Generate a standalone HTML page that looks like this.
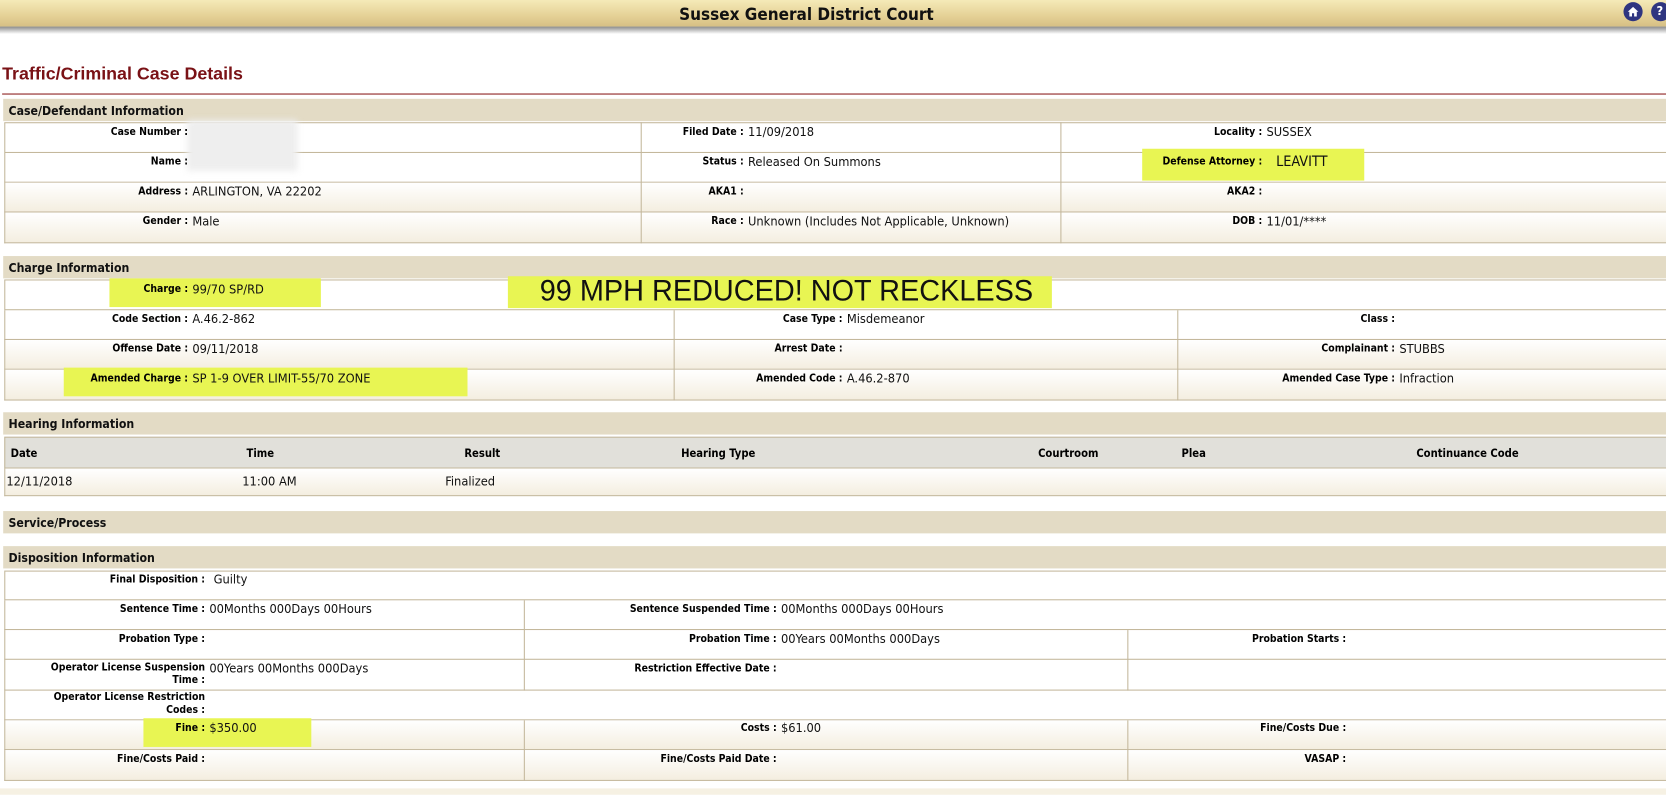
<!DOCTYPE html>
<html><head><meta charset="utf-8">
<style>
html,body{margin:0;padding:0;width:1666px;height:794px;overflow:hidden;background:#fff}
#w{position:absolute;left:0;top:0;width:1568px;height:747px;transform:scale(1.0625);transform-origin:0 0;font-family:"DejaVu Sans Condensed","DejaVu Sans",sans-serif;color:#111}
div{position:absolute;box-sizing:border-box}
.hb{left:3px;width:1600px;height:21px;background:#e3dbc5;font-weight:bold;font-size:11.5px;padding:4px 0 0 5px;color:#111}
.r{left:4px;width:1600px;border:1px solid #c4b89c;border-top:none}
.g{background:linear-gradient(#fff,#f4eee0)}
.v{width:1px;background:#c4b89c}
.l{text-align:right;font-weight:bold;font-size:9.8px;white-space:nowrap;color:#000}
.t{font-size:12px;white-space:nowrap}
.hl{background:#e8f553}
</style></head><body><div id="w">
<div style="left:0;top:0;width:1568px;height:25px;background:linear-gradient(#f5eab8,#e5d196 60%,#d6bf84)"></div>
<div style="left:0;top:25px;width:1568px;height:7px;background:linear-gradient(#8a8a8a,#fff)"></div>
<div style="left:0;top:4px;width:1518px;text-align:center;font-weight:bold;font-size:16px;color:#111">Sussex General District Court</div>
<div style="left:1528px;top:2px;width:18px;height:18px;border-radius:50%;background:#2f3580"><svg width="18" height="18" viewBox="0 0 18 18"><path d="M4 9 L9 4.5 L14 9 L12.5 9 L12.5 13.5 L10 13.5 L10 10.5 L8 10.5 L8 13.5 L5.5 13.5 L5.5 9 Z" fill="#fff"/></svg></div>
<div style="left:1554px;top:2px;width:18px;height:18px;border-radius:50%;background:#2f3580;color:#fff;font-weight:bold;font-size:12px;padding:1px 0 0 5px">?</div>

<div style="left:2px;top:60px;font-family:'Liberation Sans',sans-serif;font-weight:bold;font-size:16.8px;color:#7a1216">Traffic/Criminal Case Details</div>
<div style="left:2px;top:88px;width:1600px;height:1px;background:#8a1a1a"></div>

<div class="hb" style="top:93px">Case/Defendant Information</div>
<div class="r" style="top:115px;height:29px;border-top:1px solid #c4b89c"></div>
<div class="r" style="top:144px;height:28px"></div>
<div class="r g" style="top:172px;height:28px"></div>
<div class="r g" style="top:200px;height:29px"></div>
<div class="v" style="left:603px;top:115px;height:114px"></div>
<div class="v" style="left:998px;top:115px;height:114px"></div>
<div class="hl" style="left:1075px;top:140px;width:209px;height:30px"></div>
<div style="left:176px;top:113px;width:104px;height:48px;background:#eeeeee;filter:blur(3px)"></div>

<div class="l" style="left:0;width:177px;top:119px">Case Number :</div>
<div class="l" style="left:0;width:177px;top:147px">Name :</div>
<div class="l" style="left:0;width:177px;top:175px">Address :</div><div class="t" style="left:181px;top:173px">ARLINGTON, VA 22202</div>
<div class="l" style="left:0;width:177px;top:203px">Gender :</div><div class="t" style="left:181px;top:201px">Male</div>
<div class="l" style="left:0;width:700px;top:119px">Filed Date :</div><div class="t" style="left:704px;top:117px">11/09/2018</div>
<div class="l" style="left:0;width:700px;top:147px">Status :</div><div class="t" style="left:704px;top:145px">Released On Summons</div>
<div class="l" style="left:0;width:700px;top:175px">AKA1 :</div>
<div class="l" style="left:0;width:700px;top:203px">Race :</div><div class="t" style="left:704px;top:201px">Unknown (Includes Not Applicable, Unknown)</div>
<div class="l" style="left:0;width:1188px;top:119px">Locality :</div><div class="t" style="left:1192px;top:117px">SUSSEX</div>
<div class="l" style="left:0;width:1188px;top:147px">Defense Attorney :</div><div class="t" style="left:1201px;top:144px;font-size:13.5px">LEAVITT</div>
<div class="l" style="left:0;width:1188px;top:175px">AKA2 :</div>
<div class="l" style="left:0;width:1188px;top:203px">DOB :</div><div class="t" style="left:1192px;top:201px">11/01/****</div>

<div class="hb" style="top:241px">Charge Information</div>
<div class="r" style="top:263px;height:29px;border-top:1px solid #c4b89c"></div>
<div class="r" style="top:292px;height:28px"></div>
<div class="r g" style="top:320px;height:28px"></div>
<div class="r g" style="top:348px;height:29px"></div>
<div class="v" style="left:634px;top:292px;height:85px"></div>
<div class="v" style="left:1108px;top:292px;height:85px"></div>
<div class="hl" style="left:103px;top:262px;width:199px;height:27px"></div>
<div class="hl" style="left:478px;top:260px;width:512px;height:30px"></div>
<div class="hl" style="left:60px;top:346px;width:380px;height:27px"></div>
<div style="left:508px;top:258px;font-family:'Liberation Sans',sans-serif;font-size:28px;line-height:32px;transform:scaleX(0.97);transform-origin:0 0;color:#111">99 MPH REDUCED! NOT RECKLESS</div>
<div class="l" style="left:0;width:177px;top:267px">Charge :</div><div class="t" style="left:181px;top:265px">99/70 SP/RD</div>
<div class="l" style="left:0;width:177px;top:295px">Code Section :</div><div class="t" style="left:181px;top:293px">A.46.2-862</div>
<div class="l" style="left:0;width:177px;top:323px">Offense Date :</div><div class="t" style="left:181px;top:321px">09/11/2018</div>
<div class="l" style="left:0;width:177px;top:351px">Amended Charge :</div><div class="t" style="left:181px;top:349px">SP 1-9 OVER LIMIT-55/70 ZONE</div>
<div class="l" style="left:0;width:793px;top:295px">Case Type :</div><div class="t" style="left:797px;top:293px">Misdemeanor</div>
<div class="l" style="left:0;width:793px;top:323px">Arrest Date :</div>
<div class="l" style="left:0;width:793px;top:351px">Amended Code :</div><div class="t" style="left:797px;top:349px">A.46.2-870</div>
<div class="l" style="left:0;width:1313px;top:295px">Class :</div>
<div class="l" style="left:0;width:1313px;top:323px">Complainant :</div><div class="t" style="left:1317px;top:321px">STUBBS</div>
<div class="l" style="left:0;width:1313px;top:351px">Amended Case Type :</div><div class="t" style="left:1317px;top:349px">Infraction</div>

<div class="hb" style="top:388px">Hearing Information</div>
<div style="left:4px;top:411px;width:1600px;height:30px;background:#e1e0da;border:1px solid #c4b89c"></div>
<div class="r g" style="top:441px;height:26px"></div>
<div class="l" style="left:10px;top:421px;font-size:10.5px">Date</div>
<div class="l" style="left:232px;top:421px;font-size:10.5px">Time</div>
<div class="l" style="left:437px;top:421px;font-size:10.5px">Result</div>
<div class="l" style="left:641px;top:421px;font-size:10.5px">Hearing Type</div>
<div class="l" style="left:977px;top:421px;font-size:10.5px">Courtroom</div>
<div class="l" style="left:1112px;top:421px;font-size:10.5px">Plea</div>
<div class="l" style="left:1333px;top:421px;font-size:10.5px">Continuance Code</div>
<div class="t" style="left:6px;top:446px">12/11/2018</div>
<div class="t" style="left:228px;top:446px">11:00 AM</div>
<div class="t" style="left:419px;top:446px">Finalized</div>

<div class="hb" style="top:481px">Service/Process</div>

<div class="hb" style="top:514px">Disposition Information</div>
<div class="r" style="top:537px;height:28px;border-top:1px solid #c4b89c"></div>
<div class="r" style="top:565px;height:28px"></div>
<div class="r" style="top:593px;height:28px"></div>
<div class="r" style="top:621px;height:29px"></div>
<div class="r" style="top:650px;height:28px"></div>
<div class="r g" style="top:678px;height:28px"></div>
<div class="r g" style="top:706px;height:29px"></div>
<div class="v" style="left:493px;top:565px;height:85px"></div>
<div class="v" style="left:1061px;top:593px;height:57px"></div>
<div class="v" style="left:493px;top:678px;height:57px"></div>
<div class="v" style="left:1061px;top:678px;height:57px"></div>
<div class="hl" style="left:135px;top:676px;width:158px;height:27px"></div>
<div class="l" style="left:0;width:193px;top:540px">Final Disposition :</div><div class="t" style="left:201px;top:538px">Guilty</div>
<div class="l" style="left:0;width:193px;top:568px">Sentence Time :</div><div class="t" style="left:197px;top:566px">00Months 000Days 00Hours</div>
<div class="l" style="left:0;width:193px;top:596px">Probation Type :</div>
<div class="l" style="left:0;width:193px;top:623px;line-height:12px">Operator License Suspension<br>Time :</div><div class="t" style="left:197px;top:622px">00Years 00Months 000Days</div>
<div class="l" style="left:0;width:193px;top:651px;line-height:12px">Operator License Restriction<br>Codes :</div>
<div class="l" style="left:0;width:193px;top:680px">Fine :</div><div class="t" style="left:197px;top:678px">$350.00</div>
<div class="l" style="left:0;width:193px;top:709px">Fine/Costs Paid :</div>
<div class="l" style="left:0;width:731px;top:568px">Sentence Suspended Time :</div><div class="t" style="left:735px;top:566px">00Months 000Days 00Hours</div>
<div class="l" style="left:0;width:731px;top:596px">Probation Time :</div><div class="t" style="left:735px;top:594px">00Years 00Months 000Days</div>
<div class="l" style="left:0;width:731px;top:624px">Restriction Effective Date :</div>
<div class="l" style="left:0;width:731px;top:680px">Costs :</div><div class="t" style="left:735px;top:678px">$61.00</div>
<div class="l" style="left:0;width:731px;top:709px">Fine/Costs Paid Date :</div>
<div class="l" style="left:0;width:1267px;top:596px">Probation Starts :</div>
<div class="l" style="left:0;width:1267px;top:680px">Fine/Costs Due :</div>
<div class="l" style="left:0;width:1267px;top:709px">VASAP :</div>
<div style="left:0;top:742px;width:1600px;height:6px;background:#f6f1e3"></div>
</div></body></html>
